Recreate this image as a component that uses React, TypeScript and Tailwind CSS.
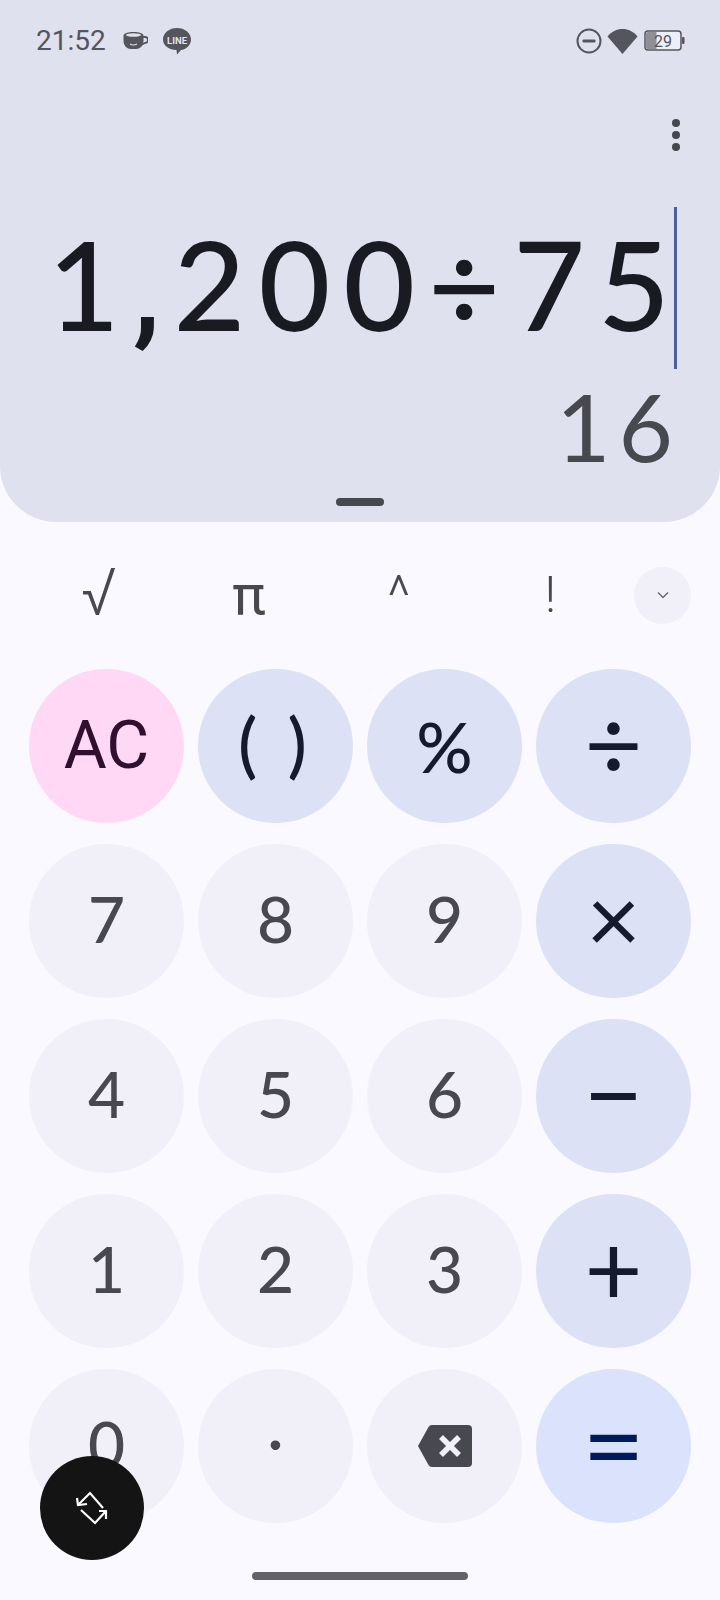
const keys = [
  { label: 'AC', tone: 'clear', text: "font-['Roboto',sans-serif] text-[66px]" },
  { label: '( )', tone: 'op', text: 'text-[72px] font-medium tracking-[6px] pb-[8px]' },
  { label: '%', tone: 'op', text: 'text-[70px] font-medium' },
  { label: '÷', tone: 'op', text: 'text-[100px] pb-[8px]' },
  { label: '7', tone: 'num', text: 'text-[64px] font-medium pb-[4px]' },
  { label: '8', tone: 'num', text: 'text-[64px] font-medium pb-[4px]' },
  { label: '9', tone: 'num', text: 'text-[64px] font-medium pb-[4px]' },
  { label: '×', tone: 'op', text: 'text-[94px] pb-[8px]' },
  { label: '4', tone: 'num', text: 'text-[64px] font-medium pb-[4px]' },
  { label: '5', tone: 'num', text: 'text-[64px] font-medium pb-[4px]' },
  { label: '6', tone: 'num', text: 'text-[64px] font-medium pb-[4px]' },
  { label: '−', tone: 'op', text: 'text-[104px] pb-[8px]' },
  { label: '1', tone: 'num', text: 'text-[64px] font-medium pb-[4px]' },
  { label: '2', tone: 'num', text: 'text-[64px] font-medium pb-[4px]' },
  { label: '3', tone: 'num', text: 'text-[64px] font-medium pb-[4px]' },
  { label: '+', tone: 'op', text: 'text-[100px] pb-[8px]' },
  { label: '0', tone: 'num', text: 'text-[64px] font-medium pb-[4px]' },
  { label: '·', tone: 'num', text: 'text-[60px] font-medium pb-[12px]' },
  { label: 'back', tone: 'num', text: '' },
  { label: '=', tone: 'equals', text: 'text-[108px] pb-[8px]' },
];

const toneClass: Record<string, string> = {
  clear: 'bg-[#ffd8f6] text-[#30102e]',
  op: 'bg-[#dce1f6] text-[#151a2d]',
  num: 'bg-[#f1f0f8] text-[#48484f]',
  equals: 'bg-[#dbe2fc] text-[#001a5c]',
};

const StatusBar = () => (
  <div className="flex items-center h-[26px] pl-[36px] pr-[35px] text-[#55555e]">
    <span className="text-[28px] leading-none font-['Roboto',sans-serif]">21:52</span>
    <svg className="ml-[17px]" width="25" height="20" viewBox="0 0 25 20">
      <path d="M0.500 5C.5 2 5 1 10.500 1S20.500 2 20.500 5v5c0 5-4 8-7 8h-6c-3 0-7-3-7-8z" fill="currentColor" />
      <ellipse cx="10.500" cy="4" rx="7.500" ry="1.800" fill="#e0e1ee" />
      <path d="M20 6h2a2.500 2.500 0 0 1 0 6l-3 1.500" fill="none" stroke="currentColor" strokeWidth="1.800" />
      <path d="M7 13q3.500 2 7 0" fill="none" stroke="#e0e1ee" strokeWidth="1.200" />
    </svg>
    <svg className="ml-[15px]" width="28" height="27" viewBox="0 0 28 27">
      <path d="M14 0c7.700 0 14 4.900 14 11.500 0 6-5 10-10 10.500l-4 4.500-.5-4.500C6 22 0 17.500 0 11.500 0 4.900 6.300 0 14 0z" fill="currentColor" />
      <text x="14" y="16" textAnchor="middle" fontSize="9.500" fontWeight="700" fill="#e0e1ee" fontFamily="Roboto, sans-serif">LINE</text>
    </svg>
    <div className="flex-1" />
    <svg width="26" height="26" viewBox="0 0 26 26">
      <circle cx="13" cy="13" r="11.500" fill="none" stroke="currentColor" strokeWidth="2" />
      <rect x="6.500" y="11.500" width="13" height="3" rx="1" fill="currentColor" />
    </svg>
    <svg className="ml-[5px]" width="31" height="26" viewBox="0 0 31 26">
      <path d="M0.500 8.500C4.500 3.500 9.500 1 15.500 1s11 2.500 15 7.500L15.500 26z" fill="currentColor" />
    </svg>
    <svg className="ml-[6px]" width="41" height="22" viewBox="0 0 41 22">
      <rect x="1" y="1" width="36" height="19" rx="3" fill="#eeeef6" stroke="currentColor" strokeWidth="1.500" />
      <path d="M2 4a2 2 0 0 1 2-2h8.500v17H4a2 2 0 0 1-2-2z" fill="#8f8f98" />
      <rect x="38" y="7" width="2.500" height="7" rx="1" fill="currentColor" />
      <text x="19" y="16.500" textAnchor="middle" fontSize="16" fill="currentColor" fontFamily="Roboto, sans-serif">29</text>
    </svg>
  </div>
);

const Display = () => (
  <div className="h-[522px] bg-[#e0e1ee] rounded-b-[56px] pt-[28px] flex flex-col">
    <StatusBar />
    <div className="flex justify-end pr-[40px] mt-[65px]">
      <div className="flex flex-col gap-[4px]">
        <div className="w-[8px] h-[8px] rounded-full bg-[#46464f]" />
        <div className="w-[8px] h-[8px] rounded-full bg-[#46464f]" />
        <div className="w-[8px] h-[8px] rounded-full bg-[#46464f]" />
      </div>
    </div>
    <div className="flex justify-end items-stretch h-[162px] mt-[56px] pr-[43px]">
      <div className="text-[124px] font-medium leading-[152px] tracking-[13px] text-[#1a1b22] font-['Lato',sans-serif] whitespace-nowrap">
        1<span className="font-['Roboto',sans-serif]">,</span>200÷7<span className="tracking-[4px]">5</span>
      </div>
      <div className="w-[3px] bg-[#4a5d9c]" />
    </div>
    <div className="flex justify-end pr-[39px] mt-[1px]">
      <div className="text-[94px] leading-[112px] tracking-[8px] text-[#48484f] font-['Lato',sans-serif]">
        16
      </div>
    </div>
    <div className="w-[48px] h-[8px] rounded-full bg-[#48484f] mx-auto mt-[16px]" />
  </div>
);

const ScienceRow = () => (
  <div className="flex items-center h-[56px] mt-[45px] pl-[24px] text-[#48484f] font-['Roboto',sans-serif]">
    <div className="w-[150px] text-center text-[66px] font-light leading-none pb-[4px]">√</div>
    <div className="w-[150px] text-center text-[56px] leading-none">π</div>
    <div className="w-[150px] text-center text-[56px] font-light leading-none pt-[2px]">^</div>
    <div className="w-[150px] pl-[3px] text-center text-[50px] font-light leading-none">!</div>
    <div className="w-[57px] h-[57px] ml-[10px] rounded-full bg-[#f1f0f8] flex items-center justify-center">
      <svg width="14" height="10" viewBox="0 0 14 10">
        <path d="M2 2.500l5 5 5-5" fill="none" stroke="#6b6b74" strokeWidth="1.500" />
      </svg>
    </div>
  </div>
);

const Backspace = () => (
  <svg width="54" height="42" viewBox="0 0 54 42">
    <path d="M14 0h36a4 4 0 0 1 4 4v34a4 4 0 0 1-4 4H14a4 4 0 0 1-3.500-2L0 21 10.500 2A4 4 0 0 1 14 0z" fill="currentColor" />
    <path d="M23 12l18 18M41 12L23 30" stroke="#f1f0f8" strokeWidth="5.500" fill="none" />
  </svg>
);

const Keypad = () => (
  <div className="grid grid-cols-4 gap-x-[14px] gap-y-[21px] px-[29px] mt-[46px]">
    {keys.map((key) => (
      <div
        key={key.label}
        className={`h-[154px] rounded-full flex items-center justify-center font-['Lato',sans-serif] leading-none ${toneClass[key.tone]} ${key.text}`}
      >
        {key.label === 'back' ? <Backspace /> : key.label}
      </div>
    ))}
  </div>
);

const App = () => (
  <div className="relative w-[720px] h-[1600px] bg-[#f9f9ff] overflow-hidden">
    <Display />
    <ScienceRow />
    <Keypad />
    <div className="absolute left-[40px] top-[1456px] w-[104px] h-[104px] rounded-full bg-[#141414] flex items-center justify-center">
      <svg width="60" height="60" viewBox="0 0 60 60" fill="none" stroke="#fff" strokeWidth="2.200">
        <path d="M41 30L28 15 17 26" />
        <path d="M15 20l1 7 9-1" />
        <path d="M19 32l14 13 11-12" />
        <path d="M37 33h7v8" />
      </svg>
    </div>
    <div className="absolute left-[252px] top-[1572px] w-[216px] h-[8px] rounded-full bg-[#626267]" />
  </div>
);

export default App;
